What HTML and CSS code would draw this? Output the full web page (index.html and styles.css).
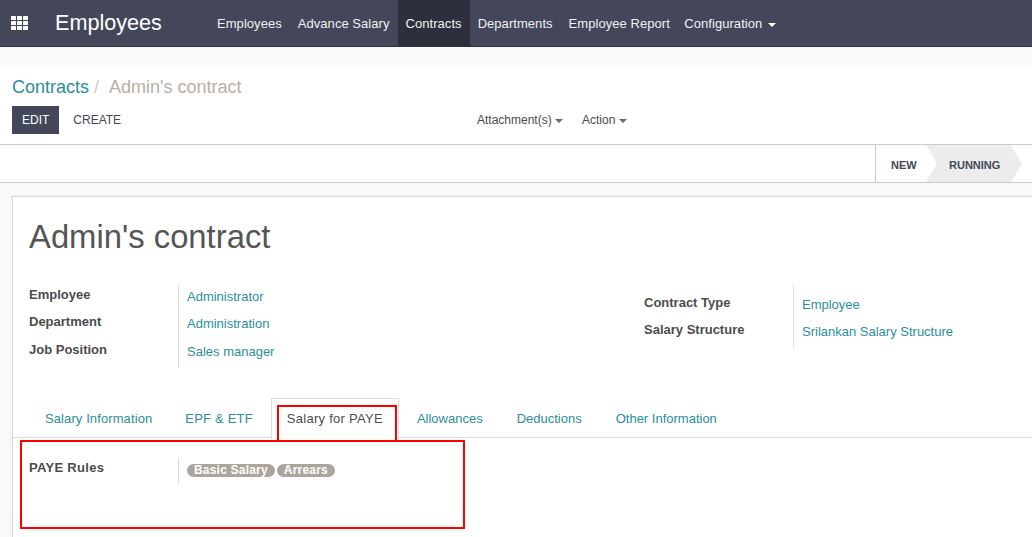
FILE: index.html
```html
<!DOCTYPE html>
<html lang="en">
<head>
  <meta charset="UTF-8">
  <meta name="viewport" content="width=device-width, initial-scale=1.0">
  <title>Admin's contract</title>
  <link rel="stylesheet" href="styles.css">
</head>
<body>
  <nav class="navbar">
    <a class="apps-icon" href="#" aria-label="Applications">
      <svg width="17" height="14" viewBox="0 0 17 14" fill="#fff">
        <rect x="0" y="0" width="5" height="4" rx="0.5"/><rect x="6" y="0" width="5" height="4" rx="0.5"/><rect x="12" y="0" width="5" height="4" rx="0.5"/>
        <rect x="0" y="5" width="5" height="4" rx="0.5"/><rect x="6" y="5" width="5" height="4" rx="0.5"/><rect x="12" y="5" width="5" height="4" rx="0.5"/>
        <rect x="0" y="10" width="5" height="4" rx="0.5"/><rect x="6" y="10" width="5" height="4" rx="0.5"/><rect x="12" y="10" width="5" height="4" rx="0.5"/>
      </svg>
    </a>
    <span class="brand">Employees</span>
    <ul class="menu">
      <li><a href="#">Employees</a></li>
      <li><a href="#">Advance Salary</a></li>
      <li class="active"><a href="#">Contracts</a></li>
      <li><a href="#">Departments</a></li>
      <li><a href="#">Employee Report</a></li>
      <li><a href="#">Configuration <span class="caret caret-menu"></span></a></li>
    </ul>
  </nav>

  <div class="control-panel">
    <div class="breadcrumb">
      <a href="#">Contracts</a><span class="sep">/</span><span class="current">Admin's contract</span>
    </div>
    <div class="cp-buttons">
      <div class="cp-left">
        <button class="btn btn-primary">EDIT</button>
        <button class="btn btn-link">CREATE</button>
      </div>
      <div class="cp-sidebar">
        <span class="cp-drop">Attachment(s) <span class="caret"></span></span>
        <span class="cp-drop">Action <span class="caret"></span></span>
      </div>
    </div>
  </div>

  <div class="statusbar">
    <div class="status-steps">
      <span class="step">NEW</span>
      <span class="step step-active">RUNNING</span>
    </div>
  </div>

  <main class="sheet">
    <h1 class="title">Admin's contract</h1>

    <div class="groups">
      <div class="group group-left">
        <div class="field">
          <label>Employee</label><a href="#">Administrator</a>
        </div>
        <div class="field">
          <label>Department</label><a href="#">Administration</a>
        </div>
        <div class="field">
          <label>Job Position</label><a href="#">Sales manager</a>
        </div>
      </div>
      <div class="group group-right">
        <div class="field">
          <label>Contract Type</label><a href="#">Employee</a>
        </div>
        <div class="field">
          <label>Salary Structure</label><a href="#">Srilankan Salary Structure</a>
        </div>
      </div>
    </div>

    <ul class="tabs">
      <li><a href="#">Salary Information</a></li>
      <li><a href="#">EPF &amp; ETF</a></li>
      <li class="active"><a href="#">Salary for PAYE</a></li>
      <li><a href="#">Allowances</a></li>
      <li><a href="#">Deductions</a></li>
      <li><a href="#">Other Information</a></li>
    </ul>

    <div class="tab-body">
      <div class="field field-tags">
        <label>PAYE Rules</label>
        <div class="tags">
          <span class="tag">Basic Salary</span>
          <span class="tag">Arrears</span>
        </div>
      </div>
    </div>
  </main>

  <!-- red annotation boxes from the screenshot -->
  <div class="mark mark-tab"></div>
  <div class="mark mark-body"></div>
</body>
</html>
```

FILE: styles.css
```css
html, body {
  height: 537px;
  overflow: hidden;
}
body {
  margin: 0;
  position: relative;
  font-family: "Liberation Sans", Arial, sans-serif;
  font-size: 13px;
  line-height: 18px;
  color: #4c4c4c;
  background-color: #f9f9f9;
}
a {
  color: #2b8f99;
  text-decoration: none;
}
ul {
  list-style: none;
  margin: 0;
  padding: 0;
}
.caret {
  display: inline-block;
  vertical-align: middle;
  width: 0;
  height: 0;
  border-top: 4px solid #666;
  border-left: 4px solid transparent;
  border-right: 4px solid transparent;
}
.caret-menu {
  margin-left: 2px;
  border-top-color: #fff;
}

/* top bar */
.navbar {
  display: flex;
  align-items: center;
  height: 46px;
  background-color: #434759;
  border-bottom: 1px solid #2c2e3b;
  color: #fff;
}
.apps-icon {
  display: flex;
  margin-left: 11px;
}
.brand {
  margin-left: 27px;
  width: 154px;
  font-size: 21.6px;
  line-height: 50px;
}
.menu {
  display: flex;
  height: 46px;
  letter-spacing: 0.05px;
}
.menu a {
  display: block;
  padding: 0 8px;
  line-height: 47px;
  color: #f0f0f3;
}
.menu .active {
  background-color: #2d2f3c;
}
.menu li:last-child {
  margin-left: -1.5px;
}

/* control panel */
.control-panel {
  margin-top: 18px;
  height: 79px;
  padding: 0 12px;
  background-color: #fff;
  border-bottom: 1px solid #cacaca;
}
.breadcrumb {
  padding-top: 11px;
  font-size: 18px;
  line-height: 23px;
}
.breadcrumb .sep {
  padding: 0 10px 0 5px;
  color: #ccc;
}
.breadcrumb .current {
  color: #b8aea6;
}
.cp-buttons {
  display: flex;
  margin-top: 7px;
}
.cp-left {
  display: flex;
  width: 465px;
}
.btn {
  height: 28px;
  padding: 0 10px;
  border: none;
  font: inherit;
  font-size: 12px;
}
.btn-primary {
  background-color: #434759;
  color: #fff;
}
.btn-link {
  padding: 0 14px;
  background: none;
  color: #434759;
}
.cp-sidebar {
  display: flex;
  gap: 19px;
  font-size: 12px;
  line-height: 28px;
}

/* status bar */
.statusbar {
  display: flex;
  justify-content: flex-end;
  height: 37px;
  background-color: #fff;
  border-bottom: 1px solid #cacaca;
}
.status-steps {
  display: flex;
  margin: 0 10px 0 0;
  font-size: 11px;
  font-weight: bold;
  line-height: 41px;
  color: #434759;
}
.step {
  padding: 0 10px 0 15px;
  width: 51px;
  box-sizing: border-box;
  border-left: 1px solid #cacaca;
}
.step-active {
  width: 96px;
  padding-left: 23px;
  border-left: none;
  background-color: #ececec;
  clip-path: polygon(0 0, 85px 0, 100% 50%, 85px 100%, 0 100%, 11px 50%);
}

/* form sheet */
.sheet {
  margin: 13px 0 0 12px;
  height: 340px;
  background-color: #fff;
  border: 1px solid #d9d7d7;
  border-right: none;
  border-bottom: none;
  box-shadow: 0 0 3px rgba(0, 0, 0, 0.08);
}
.title {
  margin: 0;
  padding: 17px 0 0 16px;
  font-size: 32.8px;
  font-weight: normal;
  line-height: 45px;
  color: #555;
}
.groups {
  display: flex;
  margin-top: 26px;
  height: 113px;
}
.group-left {
  width: 615px;
  padding-left: 16px;
}
.field {
  display: flex;
}
.field label {
  width: 149px;
  padding-top: 1px;
  font-weight: bold;
  box-sizing: border-box;
}
.group .field {
  height: 27px;
}
.group .field a {
  flex: 1;
  padding: 3px 0 0 8px;
  border-left: 1px solid #dcdcdc;
}
.group-left .field + .field {
  height: 28px;
}
.group-right .field:first-child {
  height: 35px;
}
.group-right .field + .field {
  height: 28px;
}
.group-right .field:first-child label {
  padding-top: 9px;
}
.group-right .field:first-child a {
  padding-top: 11px;
}

/* tabs */
.tabs {
  display: flex;
  height: 39px;
  padding-left: 16px;
  border-bottom: 1px solid #dcdcdc;
}
.tabs li {
  height: 39px;
  margin-right: 2px;
  border: 1px solid transparent;
  border-bottom: none;
}
.tabs a {
  display: block;
  padding: 0 15px;
  line-height: 39px;
}
.tabs li:first-child {
  margin-right: 1px;
  letter-spacing: 0.1px;
}
.tabs li:nth-child(2) {
  letter-spacing: 0.2px;
}
.tabs .active {
  height: 40px;
  background-color: #fff;
  border-color: #dcdcdc;
  letter-spacing: 0.27px;
}
.tabs .active a {
  color: #4c4c4c;
}
.tab-body {
  padding: 20px 16px 0;
}
.field-tags label {
  letter-spacing: 0.3px;
}
.field-tags .tags {
  display: flex;
  align-items: flex-start;
  gap: 2px;
  height: 26px;
  padding: 6px 0 0 8px;
  box-sizing: border-box;
  border-left: 1px solid #dcdcdc;
}
.tag {
  padding: 0 7px;
  height: 13px;
  border-radius: 7px;
  background-color: #aca59e;
  color: #fff;
  font-size: 12px;
  font-weight: bold;
  line-height: 13px;
  letter-spacing: 0.2px;
}

/* annotation boxes */
.mark {
  position: absolute;
  border: 2px solid #f00;
  box-sizing: border-box;
}
.mark-tab {
  left: 277px;
  top: 405px;
  width: 120px;
  height: 37px;
}
.mark-body {
  left: 20px;
  top: 440px;
  width: 445px;
  height: 89px;
}
```
